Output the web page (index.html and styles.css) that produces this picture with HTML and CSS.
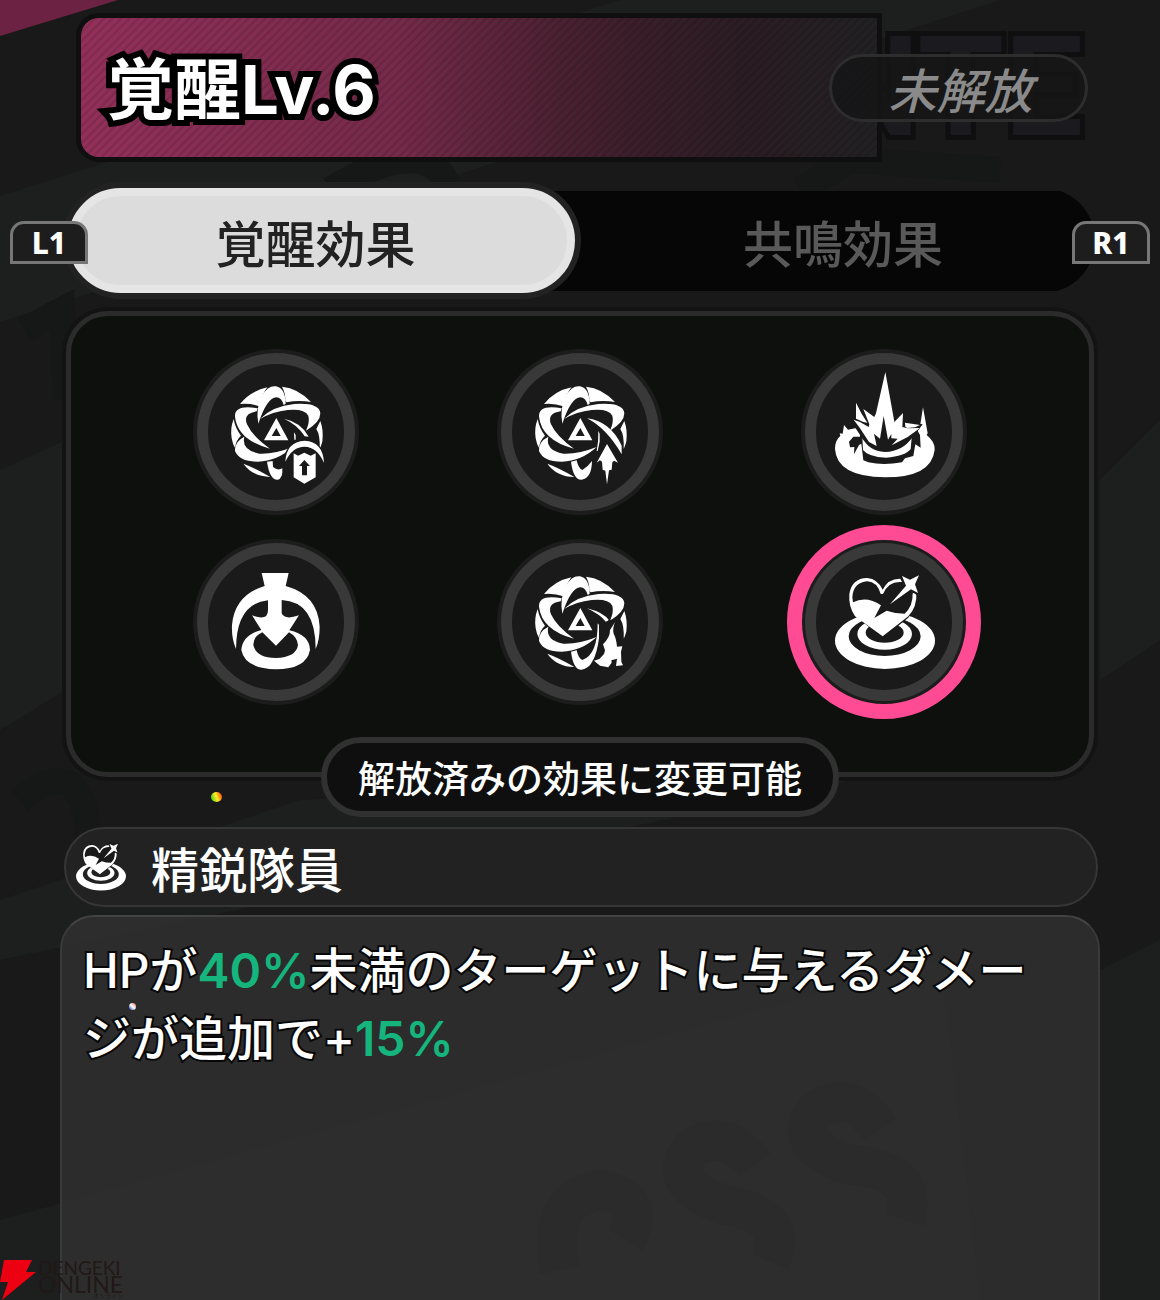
FILE: index.html
```
<!DOCTYPE html>
<html lang="ja">
<head>
<meta charset="utf-8">
<meta name="viewport" content="width=device-width, initial-scale=1">
<title>覚醒Lv.6</title>
<link rel="stylesheet" href="styles.css">
</head>
<body>
<svg class="defs" width="0" height="0" aria-hidden="true">
  <defs>
    <symbol id="orbit" viewBox="0 0 525 525">
      <path d="M147 177Q178 138 229 127Q212 150 205 184Q178 174 147 177Z"/>
      <path d="M273 125Q322 130 360 171Q322 164 287 172L283 168Q284 145 273 125Z"/>
      <path d="M202 236Q193 190 213 152Q232 120 255 124Q283 130 284 176L278 180Q272 158 256 157Q228 158 202 236Z"/>
      <path d="M207 222Q245 183 310 177Q385 172 388 205Q388 232 345 257Q357 230 352 212Q340 190 290 195Q245 200 207 222Z"/>
      <path d="M200 190Q130 178 132 215Q140 285 237 311Q185 275 168 238Q155 205 197 199Z"/>
      <path d="M160 275Q130 290 132 318Q145 350 200 350Q260 348 305 306Q250 328 205 326Q150 315 160 275Z"/>
      <path d="M128 222Q117 250 122 280Q125 298 132 308Q135 285 150 272Q133 250 128 222Z"/>
      <path d="M157 356Q195 370 238 396Q185 395 157 356Z"/>
      <path d="M388 228Q398 255 394 290Q390 303 386 312Q388 270 376 252Z"/>
      <path fill-rule="evenodd" d="M256 219L292 286H219ZM256 249L269 273H242Z"/>
    </symbol>
    <symbol id="squad" viewBox="159 164 312 290">
      <path fill-rule="evenodd" d="M165 365A150 85 0 1 1 465 365A150 85 0 1 1 165 365ZM206 352A108 59 0 1 0 422 352A108 59 0 1 0 206 352Z"/>
      <path fill-rule="evenodd" d="M232 345A82 47 0 1 1 396 345A82 47 0 1 1 232 345ZM257 341A57 30 0 1 0 371 341A57 30 0 1 0 257 341Z"/>
      <path class="shade" d="M308 358L245 306L222 280Q202 260 206 220Q215 174 262 174Q295 178 308 206Q325 176 362 176L410 220Q412 262 385 296Z"/>
      <path d="M308 352L225 292Q205 262 208 225Q215 178 262 177Q293 180 308 212Q325 178 361 179L366 189Q325 185 309 225H302Q291 188 262 187Q220 190 217 235L219 250Q260 230 303 259L283 297L320 275Q345 284 374 284Q399 262 398 223L409 221Q412 262 385 292Z"/>
      <path class="shade" d="M362 160L426 166L416 232L392 216L325 262L374 203Z"/>
      <path d="M366 171L390 182L417 169L405 196L414 222L393 211L330 256L378 200Z"/>
    </symbol>
  </defs>
</svg>

<main class="screen">
  <svg class="backdrop" viewBox="0 0 1160 1300" preserveAspectRatio="xMidYMin slice" aria-hidden="true">
    <path fill="#6b2243" d="M0 0H118L0 36Z"/>
    <g fill="#1d1e1e">
      <path d="M0 196L620 0H1000L0 322ZM0 470L66 440V690L0 730ZM0 900L300 800L900 770L0 960Z"/>
      <path d="M1100 480L1160 420V640L1100 680ZM1100 970L1160 940V1300H1100ZM0 1220L940 960L980 1300H0Z"/>
    </g>
    <g fill="none" stroke="#161717" stroke-width="26">
      <path d="M24 330L62 310L66 400M20 800Q80 750 88 830T150 850M330 190Q430 130 450 190M800 190L850 160L1000 170"/>
    </g>
    <g fill="none" stroke="#131313" stroke-width="40">
      <path d="M880 1130Q850 1085 815 1112Q790 1145 850 1165Q920 1170 905 1220M755 1165Q725 1125 690 1150Q665 1185 725 1205Q790 1215 770 1262M560 1270Q545 1200 600 1190Q650 1200 625 1240"/>
    </g>
  </svg>

  <header class="banner">
    <span class="mark" aria-hidden="true">NTE</span>
    <h1 class="level">覚醒Lv.6</h1>
    <span class="status">未解放</span>
  </header>

  <nav class="tabs" aria-label="効果の種類">
    <kbd class="key key-left">L1</kbd>
    <button class="tab tab-on" type="button" aria-pressed="true">覚醒効果</button>
    <button class="tab" type="button" aria-pressed="false">共鳴効果</button>
    <kbd class="key key-right">R1</kbd>
  </nav>

  <section class="effects">
    <div class="grid">
      <button class="skill" type="button" aria-label="覚醒1"><svg viewBox="22 24 474 474">
        <use href="#orbit" x="4" width="525" height="525"/>
        <path d="M283 221Q335 232 357 275L345 274Q325 240 283 221ZM313 262L318 270V284H314Z"/>
        <path d="M232 350Q240 405 264 404Q280 402 278 370Q264 378 250 366L249 348Z"/>
        <circle class="shade" cx="345" cy="350" r="64"/>
        <path d="M287 350Q290 290 345 287Q400 290 403 354Q383 306 345 305Q308 305 287 350Z"/>
        <path fill-rule="evenodd" d="M312 325L325 332L344 323L363 332L378 325V397L344 416L312 397ZM344 345L328 363H337V391H352V363H361Z"/>
      </svg></button>
      <button class="skill" type="button" aria-label="覚醒2"><svg viewBox="18 24 474 474">
        <use href="#orbit" width="525" height="525"/>
        <path d="M276 220Q345 228 380 302V328Q335 250 276 220ZM310 258L314 266V290L308 318H305Q311 290 310 258Z"/>
        <path d="M228 350Q235 405 260 404Q290 400 291 348Q278 366 262 375Q250 370 245 346Z"/>
        <path class="shade" d="M336 284L378 356L347 390L336 424L320 385L300 358Z"/>
        <path d="M336 297L369 353L357 347L352 352L350 374L342 376L336 418L331 377L323 374L321 350L315 346L305 353Z"/>
      </svg></button>
      <button class="skill" type="button" aria-label="覚醒3"><svg viewBox="15 24 474 474">
        <path d="M105 312Q105 285 121 273L119 265L128 266L132 240L144 254L180 247V290H345V265L359 251L369 187L383 265L380 270Q405 290 404 314Q395 397 255 397Q110 395 105 312Z"/>
        <path class="shade" d="M147 290L160 275H180L188 255H330L350 252L360 270L362 308L346 298L340 333L315 340L306 352Q250 362 205 352L190 346L184 296L177 300L162 328L163 306L150 307Z"/>
        <path d="M187 277Q205 318 255 321Q310 318 335 278L332 312Q315 334 258 338Q205 336 189 315Z"/>
        <path class="shade" d="M165 170L212 210L256 80L310 200L314 230L368 238L340 275Q300 322 250 316Q210 312 190 285L157 235Z"/>
        <path fill-rule="evenodd" d="M256 81L280 213L283 231L309 204L307 246L323 250L360 249L323 276L275 301L293 281L274 280V267L264 284L251 213L240 281L222 266L230 303L207 291L180 250L161 224L180 231L206 246L208 238L190 192L223 216L228 205Z"/>
        <path d="M168 173L184 205L202 233L190 231L168 221ZM315 233L360 240L345 247L322 249L316 245Z"/>
      </svg></button>
      <button class="skill" type="button" aria-label="覚醒4"><svg viewBox="22 24 474 474">
        <path fill-rule="evenodd" d="M216 114H297L288 153Q385 180 390 275Q390 315 378 342Q378 200 276 195V235Q285 256 328 241L299 286Q360 300 361 345Q350 403 258 403Q165 400 155 345Q158 300 215 285L187 241Q235 260 235 225V196Q140 205 139 342Q125 310 127 270Q135 180 225 153ZM218 292Q190 305 191 330Q200 369 258 369Q320 367 325 330Q322 305 298 292L259 332Z"/>
      </svg></button>
      <button class="skill" type="button" aria-label="覚醒5"><svg viewBox="18 24 474 474">
        <use href="#orbit" width="525" height="525"/>
        <path d="M276 220Q325 232 342 256L332 260Q315 238 276 220Z"/>
        <path d="M228 350Q235 405 260 404Q300 400 312 310V270L308 265Q308 360 262 375Q250 370 245 346Z"/>
        <path class="shade" d="M340 256L372 250L390 330L386 400L335 402L292 378L318 352Z"/>
        <path d="M360 262Q352 280 356 296Q364 310 366 335L382 334L378 350L379 380L384 391L363 393L366 371L349 376L350 383L340 397L315 392L297 377L313 372L327 357L330 346L324 328Q346 306 345 285Z"/>
      </svg></button>
      <button class="skill skill-on" type="button" aria-label="精鋭隊員" aria-pressed="true"><svg viewBox="75 72 474 474">
        <use href="#squad" x="159" y="164" width="312" height="290"/>
      </svg></button>
    </div>
    <p class="note">解放済みの効果に変更可能</p>
  </section>

  <h2 class="name"><svg class="name-icon" aria-hidden="true"><use href="#squad"/></svg>精鋭隊員</h2>

  <section class="detail">
    <p class="text">HPが<em>40%</em>未満のターゲットに与えるダメージが追加で+<em>15%</em></p>
  </section>

  <i class="spark spark-gold"></i>
  <i class="spark spark-blue"></i>

  <footer class="credit">
    <svg class="bolt" viewBox="0 0 36 40" aria-hidden="true"><path fill="#ed0012" d="M4 0H32L26 12H36L2 40L8 22H0Z"/></svg>
    <span class="credit-name">DENGEKI<b>ONLINE</b><small>オンライン</small></span>
  </footer>
</main>
</body>
</html>
```
FILE: styles.css
```
* { box-sizing: border-box; }

body {
  margin: 0;
  background: #191919;
  color: #fff;
  font-family: "Noto Sans CJK JP", sans-serif;
}

button {
  margin: 0;
  padding: 0;
  border: 0;
  background: none;
  color: inherit;
  font: inherit;
}

.defs { position: absolute; }

.screen {
  position: relative;
  display: flex;
  flex-direction: column;
  min-height: 100vh;
  padding: 18px 60px 0;
  overflow: hidden;
  isolation: isolate;
}

.backdrop {
  position: absolute;
  inset: 0;
  z-index: -2;
  width: 100%;
  height: 100%;
}

/* title banner */
.banner {
  position: relative;
  display: flex;
  align-items: center;
  justify-content: space-between;
  height: 139px;
  margin: 0 12px 0 21px;
  padding-left: 26px;
}

.banner::before {
  content: "";
  position: absolute;
  inset: 0 211px 0 0;
  z-index: -1;
  border-radius: 18px 0 0 18px;
  box-shadow: 0 0 0 5px #0f0f0f;
  background:
    repeating-linear-gradient(135deg, #0000 0 3px, #0000001c 4px 6px),
    linear-gradient(90deg, #93305a 0%, #752a49 40%, #4b2132 60%, #3a1e29 70%, #2b1d23 83%, #212022 100%);
}

.mark {
  position: absolute;
  right: 5px;
  z-index: -2;
  color: #1b1b1f;
  font: 700 140px/139px Roboto, sans-serif;
  -webkit-text-stroke: 10px #0f0f0f;
  paint-order: stroke fill;
}

.level {
  margin: 0;
  padding-top: 4px;
  font-family: Inter, "Noto Sans CJK JP", sans-serif;
  font-size: 67px;
  font-weight: 700;
  line-height: 80px;
  -webkit-text-stroke: 12px #000;
  paint-order: stroke fill;
}

.status {
  width: 259px;
  padding-left: 4px;
  border: 3px solid #2d2d2d;
  border-radius: 34px;
  background: #161617e0;
  color: #8a8a8a;
  font-size: 48px;
  font-style: italic;
  font-weight: 500;
  line-height: 62px;
  text-align: center;
}

/* tabs */
.tabs {
  position: relative;
  display: grid;
  grid-template-columns: 507fr 520fr;
  height: 105px;
  margin: 31px 5px 0 8px;
  border-radius: 52px;
  background: linear-gradient(#060606, #060606) 0 3px / 100% 100px no-repeat;
}

.tab {
  padding-left: 16px;
  color: #595959;
  font-size: 50px;
  font-weight: 500;
  line-height: 60px;
}

.tab-on {
  padding: 0 12px 0 0;
  border: 8px solid #e5e5e5;
  border-radius: 53px;
  background: #dcdcdc;
  box-shadow: 0 0 0 6px #222;
  color: #222;
}

.key {
  position: absolute;
  top: 33px;
  width: 78px;
  height: 43px;
  border: 3px solid #777;
  border-radius: 14px 14px 0 0;
  background: #1d1d1d;
  font: 800 30px/37px "Noto Sans", sans-serif;
  text-align: center;
}

.key-left { left: -58px; }
.key-right { right: -55px; }

/* effect picker */
.effects {
  position: relative;
  margin: 18px 6px 0;
  padding: 37px 122px 71px;
  border: 5px solid #2b2b2b;
  border-radius: 42px;
  background: #0e100e;
  box-shadow: 0 0 0 4px #131313;
}

.grid {
  display: grid;
  grid-template-columns: repeat(3, 166px);
  justify-content: space-between;
  row-gap: 32px;
}

.skill {
  position: relative;
  height: 158px;
  width: 158px;
  margin: 0 4px;
  border: 11px solid #393939;
  border-radius: 50%;
  background: #1a1a1a;
  box-shadow: 0 0 0 4px #1b1c1b;
}

.skill svg {
  display: block;
  width: 158px;
  height: 158px;
  margin: -11px;
  fill: #fff;
}

.shade { fill: #1a1a1a; }

.skill-on::after {
  content: "";
  position: absolute;
  inset: -29px;
  border: 15px solid #ff4a94;
  border-radius: 50%;
}

.note {
  position: absolute;
  bottom: -45px;
  left: 50%;
  width: 518px;
  margin: 0;
  border: 6px solid #313131;
  border-radius: 40px;
  background: #0f0f0f;
  font-size: 37px;
  font-weight: 500;
  line-height: 68px;
  text-align: center;
  white-space: nowrap;
  transform: translateX(-50%);
}

/* selected effect */
.name {
  display: flex;
  align-items: center;
  gap: 24px;
  height: 80px;
  margin: 50px 2px 8px 4px;
  padding-left: 9px;
  border: 2px solid #363636;
  border-radius: 40px;
  background: #222;
  font-size: 48px;
  font-weight: 500;
  line-height: 60px;
}

.name-icon {
  width: 52px;
  height: 50px;
  fill: #fff;
}

.detail {
  flex: 1;
  padding: 20px 50px 20px 21px;
  border: 2px solid #393939;
  border-top-color: #424242;
  border-bottom: 0;
  border-radius: 34px 34px 0 0;
  background: #323232c8;
}

.text {
  margin: 0;
  font-family: Inter, "Noto Sans CJK JP", sans-serif;
  font-size: 48px;
  font-weight: 500;
  line-height: 68px;
  word-break: break-all;
  line-break: anywhere;
  -webkit-text-stroke: 4px #080808;
  paint-order: stroke fill;
}

.text em {
  color: #15b57d;
  font-style: normal;
  font-weight: 600;
  -webkit-text-stroke: 0;
}

.spark {
  position: absolute;
  border-radius: 50%;
}

.spark-gold {
  top: 792px;
  left: 211px;
  width: 11px;
  height: 10px;
  background: linear-gradient(70deg, #1dcc1d, #ffee20 50%, #f02a10);
}

.spark-blue {
  top: 1003px;
  left: 129px;
  width: 7px;
  height: 7px;
  background: linear-gradient(45deg, #2344d0, #fff 50%, #e66a50);
}

.credit {
  position: absolute;
  bottom: 0;
  left: 0;
  display: flex;
  gap: 2px;
  height: 40px;
  color: #211817;
}

.bolt {
  width: 36px;
  height: 40px;
}

.credit-name {
  font: 400 19px/16px Lato, "Noto Sans CJK JP", sans-serif;
}

.credit-name b {
  display: block;
  font-size: 23px;
  font-weight: 400;
}

.credit-name small {
  display: block;
  font-size: 6px;
  line-height: 8px;
  text-align: right;
}
```
